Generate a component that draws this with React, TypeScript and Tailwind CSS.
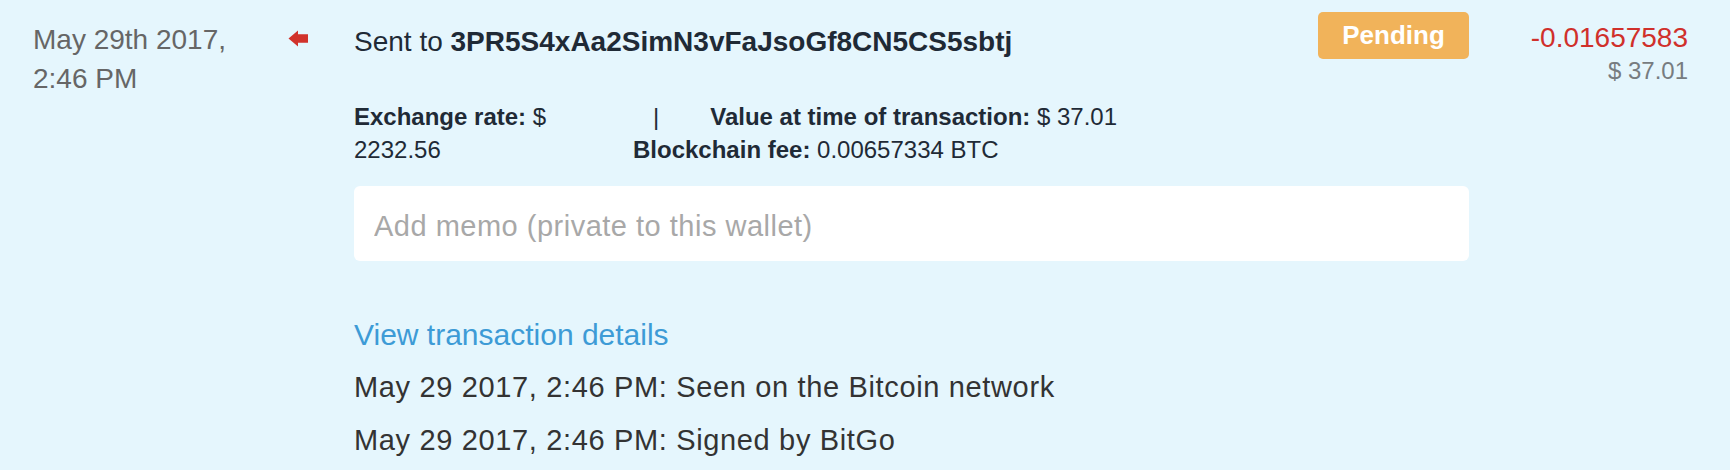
// Transaction row (wallet history) – pending outgoing transfer
import React from 'react';

function SentArrow() {
  return (
    <svg width="20" height="17" viewBox="0 0 20 17" className="block">
      <path d="M0.5 8.5 L10 0.5 L10 4.2 L20 4.2 L20 12.8 L10 12.8 L10 16.5 Z" fill="#d1322b" />
    </svg>
  );
}

export default function App() {
  return (
    <div className="w-full h-[470px] bg-[#e5f6fd] flex pl-[33px] pr-[42px] font-['Liberation_Sans',Arial,sans-serif] overflow-hidden">
      {/* Date */}
      <div className="w-[255px] shrink-0 pt-[20px] text-[28px] leading-[39px] text-[#666666]">
        <div>May 29th 2017,</div>
        <div>2:46 PM</div>
      </div>

      {/* Direction icon */}
      <div className="w-[66px] shrink-0 pt-[30px]">
        <SentArrow />
      </div>

      {/* Main details */}
      <div className="w-[1115px] shrink-0 pt-[12px]">
        <div className="flex items-start justify-between">
          <div className="pt-[10px] text-[28px] leading-[40px] text-[#1f2a36]">
            Sent to <span className="font-bold">3PR5S4xAa2SimN3vFaJsoGf8CN5CS5sbtj</span>
          </div>
          <span className="h-[47px] w-[151px] flex items-center justify-center rounded-[5px] bg-[#f1b35a] text-white text-[26px] font-bold">
            Pending
          </span>
        </div>

        <div className="mt-[38px] flex text-[24px] leading-[33px] text-[#1f2a36]">
          <div className="w-[279px] shrink-0">
            <div><span className="font-bold">Exchange rate:</span> $</div>
            <div>2232.56</div>
          </div>
          <div>
            <div className="flex">
              <span className="ml-[20px]">|</span>
              <span className="ml-[51px]">
                <span className="font-bold">Value at time of transaction:</span> $ 37.01
              </span>
            </div>
            <div>
              <span className="font-bold">Blockchain fee:</span> 0.00657334 BTC
            </div>
          </div>
        </div>

        <input
          type="text"
          placeholder="Add memo (private to this wallet)"
          className="mt-[20px] block w-full h-[75px] rounded-[6px] bg-white px-[20px] pt-[5px] text-[29px] tracking-[0.5px] text-[#333] placeholder:text-[#a8a8a8] outline-none"
        />

        <div className="mt-[54px] text-[30px] leading-[40px] text-[#3d9bd6]">View transaction details</div>

        <div className="mt-[6px] text-[29px] leading-[53px] tracking-[0.65px] text-[#333333]">
          <div>May 29 2017, 2:46 PM: Seen on the Bitcoin network</div>
          <div>May 29 2017, 2:46 PM: Signed by BitGo</div>
        </div>
      </div>

      {/* Amount */}
      <div className="flex-1 pt-[22px] text-right">
        <div className="text-[28px] leading-[32px] text-[#d0302b]">-0.01657583</div>
        <div className="mt-[1px] text-[24px] leading-[32px] text-[#777c80]">$ 37.01</div>
      </div>
    </div>
  );
}
